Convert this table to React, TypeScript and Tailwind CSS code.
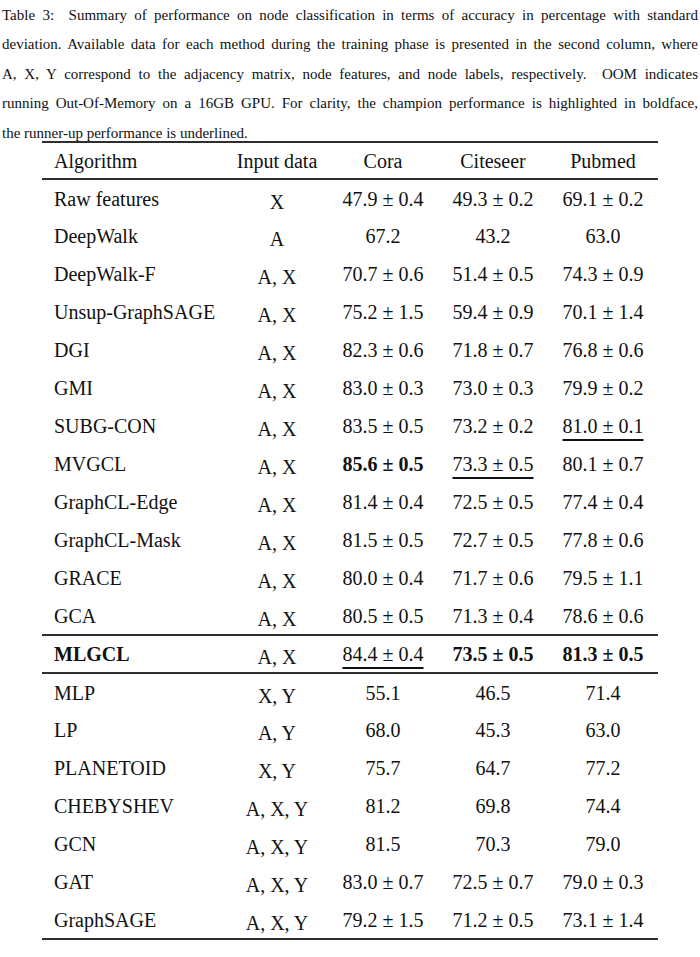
type Cell = { v: string; b?: boolean; u?: boolean };
type Row = { name: string; bold?: boolean; input: string; cora: Cell; citeseer: Cell; pubmed: Cell };

const captionLines = [
  "Table 3:\u00a0 Summary of performance on node classification in terms of accuracy in percentage with standard",
  "deviation. Available data for each method during the training phase is presented in the second column, where",
  "A, X, Y correspond to the adjacency matrix, node features, and node labels, respectively.\u00a0 OOM indicates",
  "running Out-Of-Memory on a 16GB GPU. For clarity, the champion performance is highlighted in boldface,",
];

const selfSupervised: Row[] = [
  { name: "Raw features", input: "X", cora: { v: "47.9 ± 0.4" }, citeseer: { v: "49.3 ± 0.2" }, pubmed: { v: "69.1 ± 0.2" } },
  { name: "DeepWalk", input: "A", cora: { v: "67.2" }, citeseer: { v: "43.2" }, pubmed: { v: "63.0" } },
  { name: "DeepWalk-F", input: "A, X", cora: { v: "70.7 ± 0.6" }, citeseer: { v: "51.4 ± 0.5" }, pubmed: { v: "74.3 ± 0.9" } },
  { name: "Unsup-GraphSAGE", input: "A, X", cora: { v: "75.2 ± 1.5" }, citeseer: { v: "59.4 ± 0.9" }, pubmed: { v: "70.1 ± 1.4" } },
  { name: "DGI", input: "A, X", cora: { v: "82.3 ± 0.6" }, citeseer: { v: "71.8 ± 0.7" }, pubmed: { v: "76.8 ± 0.6" } },
  { name: "GMI", input: "A, X", cora: { v: "83.0 ± 0.3" }, citeseer: { v: "73.0 ± 0.3" }, pubmed: { v: "79.9 ± 0.2" } },
  { name: "SUBG-CON", input: "A, X", cora: { v: "83.5 ± 0.5" }, citeseer: { v: "73.2 ± 0.2" }, pubmed: { v: "81.0 ± 0.1", u: true } },
  { name: "MVGCL", input: "A, X", cora: { v: "85.6 ± 0.5", b: true }, citeseer: { v: "73.3 ± 0.5", u: true }, pubmed: { v: "80.1 ± 0.7" } },
  { name: "GraphCL-Edge", input: "A, X", cora: { v: "81.4 ± 0.4" }, citeseer: { v: "72.5 ± 0.5" }, pubmed: { v: "77.4 ± 0.4" } },
  { name: "GraphCL-Mask", input: "A, X", cora: { v: "81.5 ± 0.5" }, citeseer: { v: "72.7 ± 0.5" }, pubmed: { v: "77.8 ± 0.6" } },
  { name: "GRACE", input: "A, X", cora: { v: "80.0 ± 0.4" }, citeseer: { v: "71.7 ± 0.6" }, pubmed: { v: "79.5 ± 1.1" } },
  { name: "GCA", input: "A, X", cora: { v: "80.5 ± 0.5" }, citeseer: { v: "71.3 ± 0.4" }, pubmed: { v: "78.6 ± 0.6" } },
];

const ours: Row[] = [
  {
    name: "MLGCL",
    bold: true,
    input: "A, X",
    cora: { v: "84.4 ± 0.4", u: true },
    citeseer: { v: "73.5 ± 0.5", b: true },
    pubmed: { v: "81.3 ± 0.5", b: true },
  },
];

const supervised: Row[] = [
  { name: "MLP", input: "X, Y", cora: { v: "55.1" }, citeseer: { v: "46.5" }, pubmed: { v: "71.4" } },
  { name: "LP", input: "A, Y", cora: { v: "68.0" }, citeseer: { v: "45.3" }, pubmed: { v: "63.0" } },
  { name: "PLANETOID", input: "X, Y", cora: { v: "75.7" }, citeseer: { v: "64.7" }, pubmed: { v: "77.2" } },
  { name: "CHEBYSHEV", input: "A, X, Y", cora: { v: "81.2" }, citeseer: { v: "69.8" }, pubmed: { v: "74.4" } },
  { name: "GCN", input: "A, X, Y", cora: { v: "81.5" }, citeseer: { v: "70.3" }, pubmed: { v: "79.0" } },
  { name: "GAT", input: "A, X, Y", cora: { v: "83.0 ± 0.7" }, citeseer: { v: "72.5 ± 0.7" }, pubmed: { v: "79.0 ± 0.3" } },
  { name: "GraphSAGE", input: "A, X, Y", cora: { v: "79.2 ± 1.5" }, citeseer: { v: "71.2 ± 0.5" }, pubmed: { v: "73.1 ± 1.4" } },
];

function Value({ cell }: { cell: Cell }) {
  return (
    <td className="p-0 text-center">
      <span
        className={`${cell.b ? "font-bold" : ""} ${
          cell.u ? "underline decoration-[1.5px] underline-offset-[6px]" : ""
        }`}
      >
        {cell.v}
      </span>
    </td>
  );
}

function Rows({ rows }: { rows: Row[] }) {
  return (
    <tbody className="border-b-2 border-[#2e2e2e]">
      {rows.map((row) => (
        <tr key={row.name} className="h-[38px]">
          <td className={`p-0 pl-3 text-left ${row.bold ? "font-bold" : ""}`}>{row.name}</td>
          <td className="p-0 pt-[6px] text-center">{row.input}</td>
          <Value cell={row.cora} />
          <Value cell={row.citeseer} />
          <Value cell={row.pubmed} />
        </tr>
      ))}
    </tbody>
  );
}

export default function App() {
  return (
    <div className="h-[957px] w-[700px] bg-white font-['Liberation_Serif',serif] text-[#111]">
      <div className="h-[140px] px-[2px] pt-[1px] text-[15px] leading-[29.4px]">
        {captionLines.map((line) => (
          <p key={line} className="whitespace-nowrap text-justify [text-align-last:justify]">
            {line}
          </p>
        ))}
        <p>the runner-up performance is underlined.</p>
      </div>

      <table className="mt-[1px] ml-[42px] w-[616px] table-fixed border-collapse text-[20px] leading-none">
        <colgroup>
          <col className="w-[184px]" />
          <col className="w-[102px]" />
          <col className="w-[110px]" />
          <col className="w-[110px]" />
          <col className="w-[110px]" />
        </colgroup>
        <thead className="border-y-2 border-[#2e2e2e]">
          <tr className="h-[37px]">
            <th className="p-0 pl-3 text-left font-normal">Algorithm</th>
            <th className="p-0 text-center font-normal">Input data</th>
            <th className="p-0 text-center font-normal">Cora</th>
            <th className="p-0 text-center font-normal">Citeseer</th>
            <th className="p-0 text-center font-normal">Pubmed</th>
          </tr>
        </thead>
        <Rows rows={selfSupervised} />
        <Rows rows={ours} />
        <Rows rows={supervised} />
      </table>
    </div>
  );
}
